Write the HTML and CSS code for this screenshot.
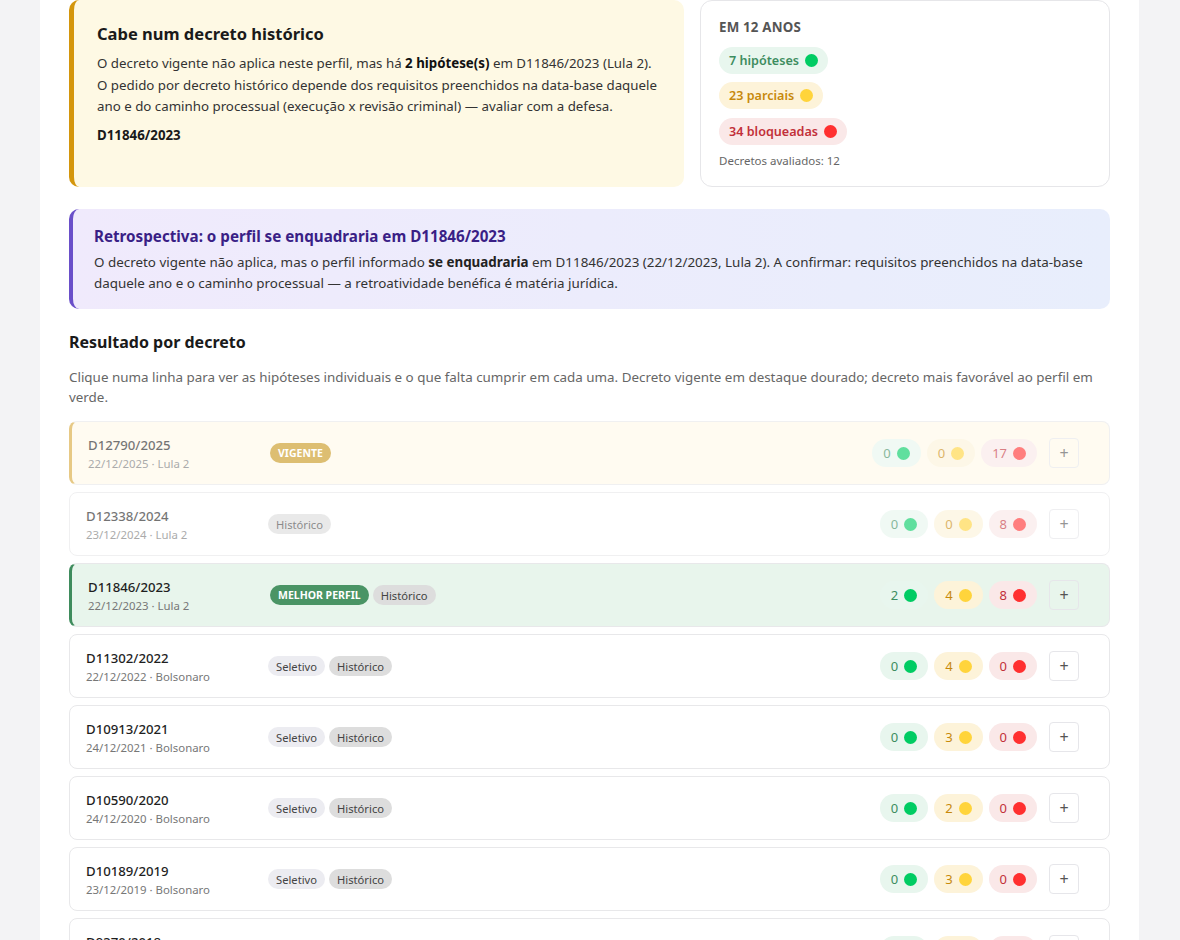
FILE: index.html
```html
<!DOCTYPE html>
<html lang="pt-BR">
<head>
  <meta charset="UTF-8">
  <meta name="viewport" content="width=device-width, initial-scale=1.0">
  <title>Resultado por decreto</title>
  <link rel="stylesheet" href="styles.css">
</head>
<body>
  <main class="pagina">
    <section class="topo">
      <div class="alerta">
        <h2>Cabe num decreto histórico</h2>
        <p>O decreto vigente não aplica neste perfil, mas há <strong>2 hipótese(s)</strong> em D11846/2023 (Lula 2). O pedido por decreto histórico depende dos requisitos preenchidos na data-base daquele ano e do caminho processual (execução x revisão criminal) — avaliar com a defesa.</p>
        <p class="alerta-ref">D11846/2023</p>
      </div>
      <div class="resumo">
        <h3>Em 12 anos</h3>
        <span class="total verde">7 hipóteses <i class="ponto"></i></span>
        <span class="total amarelo">23 parciais <i class="ponto"></i></span>
        <span class="total vermelho">34 bloqueadas <i class="ponto"></i></span>
        <p class="resumo-nota">Decretos avaliados: 12</p>
      </div>
    </section>

    <section class="retro">
      <h3>Retrospectiva: o perfil se enquadraria em D11846/2023</h3>
      <p>O decreto vigente não aplica, mas o perfil informado <strong>se enquadraria</strong> em D11846/2023 (22/12/2023, Lula 2). A confirmar: requisitos preenchidos na data-base daquele ano e o caminho processual — a retroatividade benéfica é matéria jurídica.</p>
    </section>

    <h2 class="secao">Resultado por decreto</h2>
    <p class="secao-desc">Clique numa linha para ver as hipóteses individuais e o que falta cumprir em cada uma. Decreto vigente em destaque dourado; decreto mais favorável ao perfil em verde.</p>

    <div class="lista">
      <div class="linha vigente apagada">
        <div class="nome"><b>D12790/2025</b><small>22/12/2025 · Lula 2</small></div>
        <div class="selos"><span class="selo selo-vigente">VIGENTE</span></div>
        <div class="contas">
          <span class="conta verde">0 <i class="ponto"></i></span>
          <span class="conta amarelo">0 <i class="ponto"></i></span>
          <span class="conta vermelho">17 <i class="ponto"></i></span>
        </div>
        <button class="abrir">+</button>
      </div>
      <div class="linha apagada">
        <div class="nome"><b>D12338/2024</b><small>23/12/2024 · Lula 2</small></div>
        <div class="selos"><span class="selo selo-hist">Histórico</span></div>
        <div class="contas">
          <span class="conta verde">0 <i class="ponto"></i></span>
          <span class="conta amarelo">0 <i class="ponto"></i></span>
          <span class="conta vermelho">8 <i class="ponto"></i></span>
        </div>
        <button class="abrir">+</button>
      </div>
      <div class="linha melhor">
        <div class="nome"><b>D11846/2023</b><small>22/12/2023 · Lula 2</small></div>
        <div class="selos"><span class="selo selo-melhor">MELHOR PERFIL</span><span class="selo selo-hist">Histórico</span></div>
        <div class="contas">
          <span class="conta verde">2 <i class="ponto"></i></span>
          <span class="conta amarelo">4 <i class="ponto"></i></span>
          <span class="conta vermelho">8 <i class="ponto"></i></span>
        </div>
        <button class="abrir">+</button>
      </div>
      <div class="linha">
        <div class="nome"><b>D11302/2022</b><small>22/12/2022 · Bolsonaro</small></div>
        <div class="selos"><span class="selo">Seletivo</span><span class="selo selo-hist">Histórico</span></div>
        <div class="contas">
          <span class="conta verde">0 <i class="ponto"></i></span>
          <span class="conta amarelo">4 <i class="ponto"></i></span>
          <span class="conta vermelho">0 <i class="ponto"></i></span>
        </div>
        <button class="abrir">+</button>
      </div>
      <div class="linha">
        <div class="nome"><b>D10913/2021</b><small>24/12/2021 · Bolsonaro</small></div>
        <div class="selos"><span class="selo">Seletivo</span><span class="selo selo-hist">Histórico</span></div>
        <div class="contas">
          <span class="conta verde">0 <i class="ponto"></i></span>
          <span class="conta amarelo">3 <i class="ponto"></i></span>
          <span class="conta vermelho">0 <i class="ponto"></i></span>
        </div>
        <button class="abrir">+</button>
      </div>
      <div class="linha">
        <div class="nome"><b>D10590/2020</b><small>24/12/2020 · Bolsonaro</small></div>
        <div class="selos"><span class="selo">Seletivo</span><span class="selo selo-hist">Histórico</span></div>
        <div class="contas">
          <span class="conta verde">0 <i class="ponto"></i></span>
          <span class="conta amarelo">2 <i class="ponto"></i></span>
          <span class="conta vermelho">0 <i class="ponto"></i></span>
        </div>
        <button class="abrir">+</button>
      </div>
      <div class="linha">
        <div class="nome"><b>D10189/2019</b><small>23/12/2019 · Bolsonaro</small></div>
        <div class="selos"><span class="selo">Seletivo</span><span class="selo selo-hist">Histórico</span></div>
        <div class="contas">
          <span class="conta verde">0 <i class="ponto"></i></span>
          <span class="conta amarelo">3 <i class="ponto"></i></span>
          <span class="conta vermelho">0 <i class="ponto"></i></span>
        </div>
        <button class="abrir">+</button>
      </div>
      <div class="linha">
        <div class="nome"><b>D9370/2018</b><small>21/12/2018 · Temer</small></div>
        <div class="selos"><span class="selo">Seletivo</span><span class="selo selo-hist">Histórico</span></div>
        <div class="contas">
          <span class="conta verde">0 <i class="ponto"></i></span>
          <span class="conta amarelo">2 <i class="ponto"></i></span>
          <span class="conta vermelho">0 <i class="ponto"></i></span>
        </div>
        <button class="abrir">+</button>
      </div>
    </div>
  </main>
</body>
</html>
```

FILE: styles.css
```css
body {
  margin: 0;
  background: #f3f3f5;
  font-family: 'Noto Sans', 'Open Sans', sans-serif;
  color: #222;
  height: 940px;
  overflow: hidden;
}
.pagina {
  width: 1041px;
  margin-left: 40px;
  padding: 0 29px 40px;
  background: white;
  min-height: 940px;
}

/* topo */
.topo {
  display: grid;
  grid-template-columns: 3fr 2fr;
  gap: 16px;
}
.alerta {
  background: #fef9e4;
  border-left: 5px solid #d4960c;
  border-radius: 10px;
  padding: 22px 24px 20px 23px;
}
.alerta h2 {
  margin: 0 0 8px;
  font-size: 16.5px;
  font-weight: 700;
  color: #1a1a1a;
}
.alerta p {
  margin: 0;
  font-size: 13.3px;
  line-height: 21.5px;
  color: #333;
}
.alerta strong {
  color: #111;
}
.alerta .alerta-ref {
  margin-top: 7px;
  font-weight: 700;
  color: #1a1a1a;
}
.resumo {
  border: 1px solid #e6e6e9;
  border-radius: 12px;
  padding: 17px 18px 18px;
  display: flex;
  flex-direction: column;
  align-items: flex-start;
  gap: 8.5px;
}
.resumo h3 {
  margin: 0 0 2px;
  font-size: 13.3px;
  text-transform: uppercase;
  color: #555;
  letter-spacing: 0.2px;
}
.total {
  display: inline-flex;
  align-items: center;
  gap: 6px;
  height: 27px;
  padding: 0 10px;
  border-radius: 14px;
  font-size: 12.6px;
  font-weight: 600;
}
.resumo-nota {
  margin: 0;
  font-size: 11.5px;
  color: #666;
}

/* cores */
.ponto {
  display: inline-block;
  width: 13px;
  height: 13px;
  border-radius: 50%;
}
.verde { background: #e8f6ee; color: #3d8d5f; }
.verde .ponto { background: #00cc63; }
.amarelo { background: #fdf3d9; color: #c7890b; }
.amarelo .ponto { background: #ffd43b; }
.vermelho { background: #fae8e8; color: #c23039; }
.vermelho .ponto { background: #ff3030; }

/* retrospectiva */
.retro {
  margin-top: 22px;
  background: linear-gradient(90deg, #f0eafc, #e8eefc);
  border-left: 4px solid #6a4fc9;
  border-radius: 10px;
  padding: 17px 22px 15px 21px;
}
.retro h3 {
  margin: 0 0 6px;
  font-size: 15.2px;
  color: #3a1f86;
}
.retro p {
  margin: 0;
  font-size: 13.4px;
  line-height: 21px;
  color: #333;
}
.retro strong {
  color: #222;
}

/* lista */
.secao {
  margin: 22px 0 0;
  font-size: 16px;
  color: #1a1a1a;
}
.secao-desc {
  margin: 14px 0 14px;
  font-size: 13.4px;
  line-height: 20px;
  color: #666;
}
.lista {
  display: flex;
  flex-direction: column;
  gap: 7px;
}
.linha {
  display: flex;
  align-items: center;
  gap: 12px;
  height: 64px;
  box-sizing: border-box;
  border: 1px solid #e8e8ea;
  border-radius: 8px;
  padding: 0 30px 0 16px;
  background: white;
}
.linha.apagada {
  opacity: 0.62;
}
.linha.vigente {
  background: #fffaea;
  border-left: 3px solid #d9a93c;
}
.linha.melhor {
  background: #e8f5ec;
  border-left: 3px solid #3f8c5d;
}
.nome {
  width: 170px;
  display: flex;
  flex-direction: column;
  gap: 2px;
}
.nome b {
  font-size: 13.2px;
  font-weight: 500;
  color: #1f1f1f;
}
.nome small {
  font-size: 11.4px;
  color: #777;
}
.selos {
  flex: 1;
  display: flex;
  gap: 4px;
}
.selo {
  display: inline-flex;
  align-items: center;
  height: 20px;
  padding: 0 8px;
  border-radius: 10px;
  font-size: 11.2px;
  background: #ececf1;
  color: #444;
}
.selo-hist {
  background: #dddddd;
}
.selo-vigente {
  background: #c9971c;
  color: white;
  font-weight: 700;
  font-size: 10.5px;
}
.selo-melhor {
  background: #4a9465;
  color: white;
  font-weight: 700;
  font-size: 10.5px;
}
.contas {
  display: flex;
  gap: 6px;
}
.conta {
  display: inline-flex;
  align-items: center;
  gap: 6px;
  height: 28px;
  padding: 0 11px;
  border-radius: 14px;
  font-size: 13px;
}
.abrir {
  width: 30px;
  height: 30px;
  border: 1px solid #e6e6ea;
  border-radius: 4px;
  background: white;
  color: #555;
  font-size: 16px;
  font-family: inherit;
  padding: 0;
  cursor: pointer;
}
.linha.vigente .abrir,
.linha.melhor .abrir {
  background: transparent;
}
```
